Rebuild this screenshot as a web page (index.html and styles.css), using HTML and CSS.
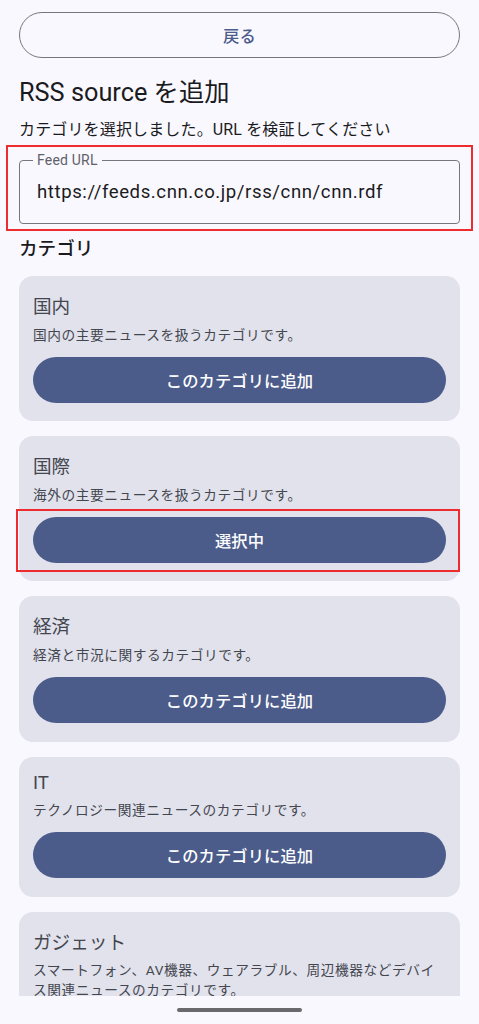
FILE: index.html
```html
<!DOCTYPE html>
<html lang="ja">
<head>
<meta charset="utf-8">
<title>RSS source を追加</title>
<link rel="stylesheet" href="styles.css">
</head>
<body>
<div class="screen">
  <div class="scroll">
    <button class="back">戻る</button>
    <h1 class="title">RSS source を追加</h1>
    <p class="subtitle">カテゴリを選択しました。URL を検証してください</p>
    <div class="field">
      <span class="field-label">Feed URL</span>
      <span class="field-value">https://feeds.cnn.co.jp/rss/cnn/cnn.rdf</span>
    </div>
    <h2 class="section">カテゴリ</h2>
    <div class="cards">
      <div class="card">
        <div class="card-title">国内</div>
        <div class="card-desc">国内の主要ニュースを扱うカテゴリです。</div>
        <button class="card-btn">このカテゴリに追加</button>
      </div>
      <div class="card">
        <div class="card-title">国際</div>
        <div class="card-desc">海外の主要ニュースを扱うカテゴリです。</div>
        <button class="card-btn">選択中</button>
      </div>
      <div class="card">
        <div class="card-title">経済</div>
        <div class="card-desc">経済と市況に関するカテゴリです。</div>
        <button class="card-btn">このカテゴリに追加</button>
      </div>
      <div class="card">
        <div class="card-title">IT</div>
        <div class="card-desc">テクノロジー関連ニュースのカテゴリです。</div>
        <button class="card-btn">このカテゴリに追加</button>
      </div>
      <div class="card card-last">
        <div class="card-title">ガジェット</div>
        <div class="card-desc">スマートフォン、AV機器、ウェアラブル、周辺機器などデバイ<br>ス関連ニュースのカテゴリです。</div>
      </div>
    </div>
  </div>
  <div class="navbar"><div class="handle"></div></div>
  <div class="mark mark-field"></div>
  <div class="mark mark-selected"></div>
</div>
</body>
</html>
```

FILE: styles.css
```css
* { box-sizing: border-box; }

html, body {
  margin: 0;
  padding: 0;
  background: #faf8ff;
}

body {
  font-family: Roboto, "Noto Sans CJK JP", sans-serif;
  color: #1a1b21;
}

.screen {
  position: relative;
  width: 479px;
  height: 1024px;
  overflow: hidden;
  display: flex;
  flex-direction: column;
}

.scroll {
  height: 996px;
  overflow: hidden;
  padding: 12px 19px 0;
  display: flex;
  flex-direction: column;
  flex: none;
}

.back {
  height: 46px;
  width: 100%;
  border: 1px solid #75777f;
  border-radius: 23px;
  background: transparent;
  color: #4b5c8b;
  font-family: Roboto, "Noto Sans CJK JP", sans-serif;
  font-size: 16.3px;
  font-weight: 500;
  letter-spacing: 0.1px;
  flex: none;
}

.title {
  margin: 19px 0 0;
  font-size: 25.3px;
  font-weight: 400;
  line-height: 32px;
  color: #1a1b21;
}

.subtitle {
  margin: 10px 0 0;
  font-size: 16px;
  line-height: 22px;
  color: #1a1b21;
  letter-spacing: 0.15px;
}

.field {
  position: relative;
  margin-top: 19px;
  height: 64px;
  border: 1px solid #75777f;
  border-radius: 4px;
  display: flex;
  align-items: center;
  padding: 0 17px;
  flex: none;
}

.field-label {
  position: absolute;
  top: -9px;
  left: 13px;
  padding: 0 4px;
  background: #faf8ff;
  font-size: 14px;
  line-height: 16px;
  color: #5f6169;
  letter-spacing: 0.2px;
}

.field-value {
  font-size: 18.6px;
  letter-spacing: 0.58px;
  color: #1a1b21;
  white-space: nowrap;
}

.section {
  margin: 12px 0 0;
  font-size: 18.6px;
  font-weight: 500;
  line-height: 26px;
  color: #1a1b21;
}

.cards {
  margin-top: 14px;
  display: flex;
  flex-direction: column;
  gap: 15px;
}

.card {
  background: #e1e2ec;
  border-radius: 14px;
  padding: 15px 14px 18.7px;
  display: flex;
  flex-direction: column;
  flex: none;
}

.card-last {
  padding-bottom: 60px;
}

.card-title {
  font-size: 18.6px;
  line-height: normal;
  color: #44464f;
}

.card-desc {
  margin-top: 5.5px;
  font-size: 13.7px;
  line-height: normal;
  letter-spacing: 0.56px;
  color: #44464f;
}

.card-btn {
  margin-top: 13px;
  height: 46px;
  width: 100%;
  border: none;
  border-radius: 23px;
  background: #4b5c8b;
  color: #ffffff;
  font-family: Roboto, "Noto Sans CJK JP", sans-serif;
  font-size: 16.3px;
  font-weight: 500;
  letter-spacing: 0.1px;
}

.navbar {
  flex: 1;
  display: flex;
  justify-content: center;
  padding-top: 12px;
  background: #faf8ff;
}

.handle {
  width: 125px;
  height: 4px;
  border-radius: 2px;
  background: #6a6a6e;
}

.mark {
  position: absolute;
  border: 2px solid #ee2b2f;
  pointer-events: none;
}

.mark-field {
  left: 6px;
  top: 145px;
  width: 467px;
  height: 86px;
}

.mark-selected {
  left: 16px;
  top: 509px;
  width: 444px;
  height: 63px;
}
```
